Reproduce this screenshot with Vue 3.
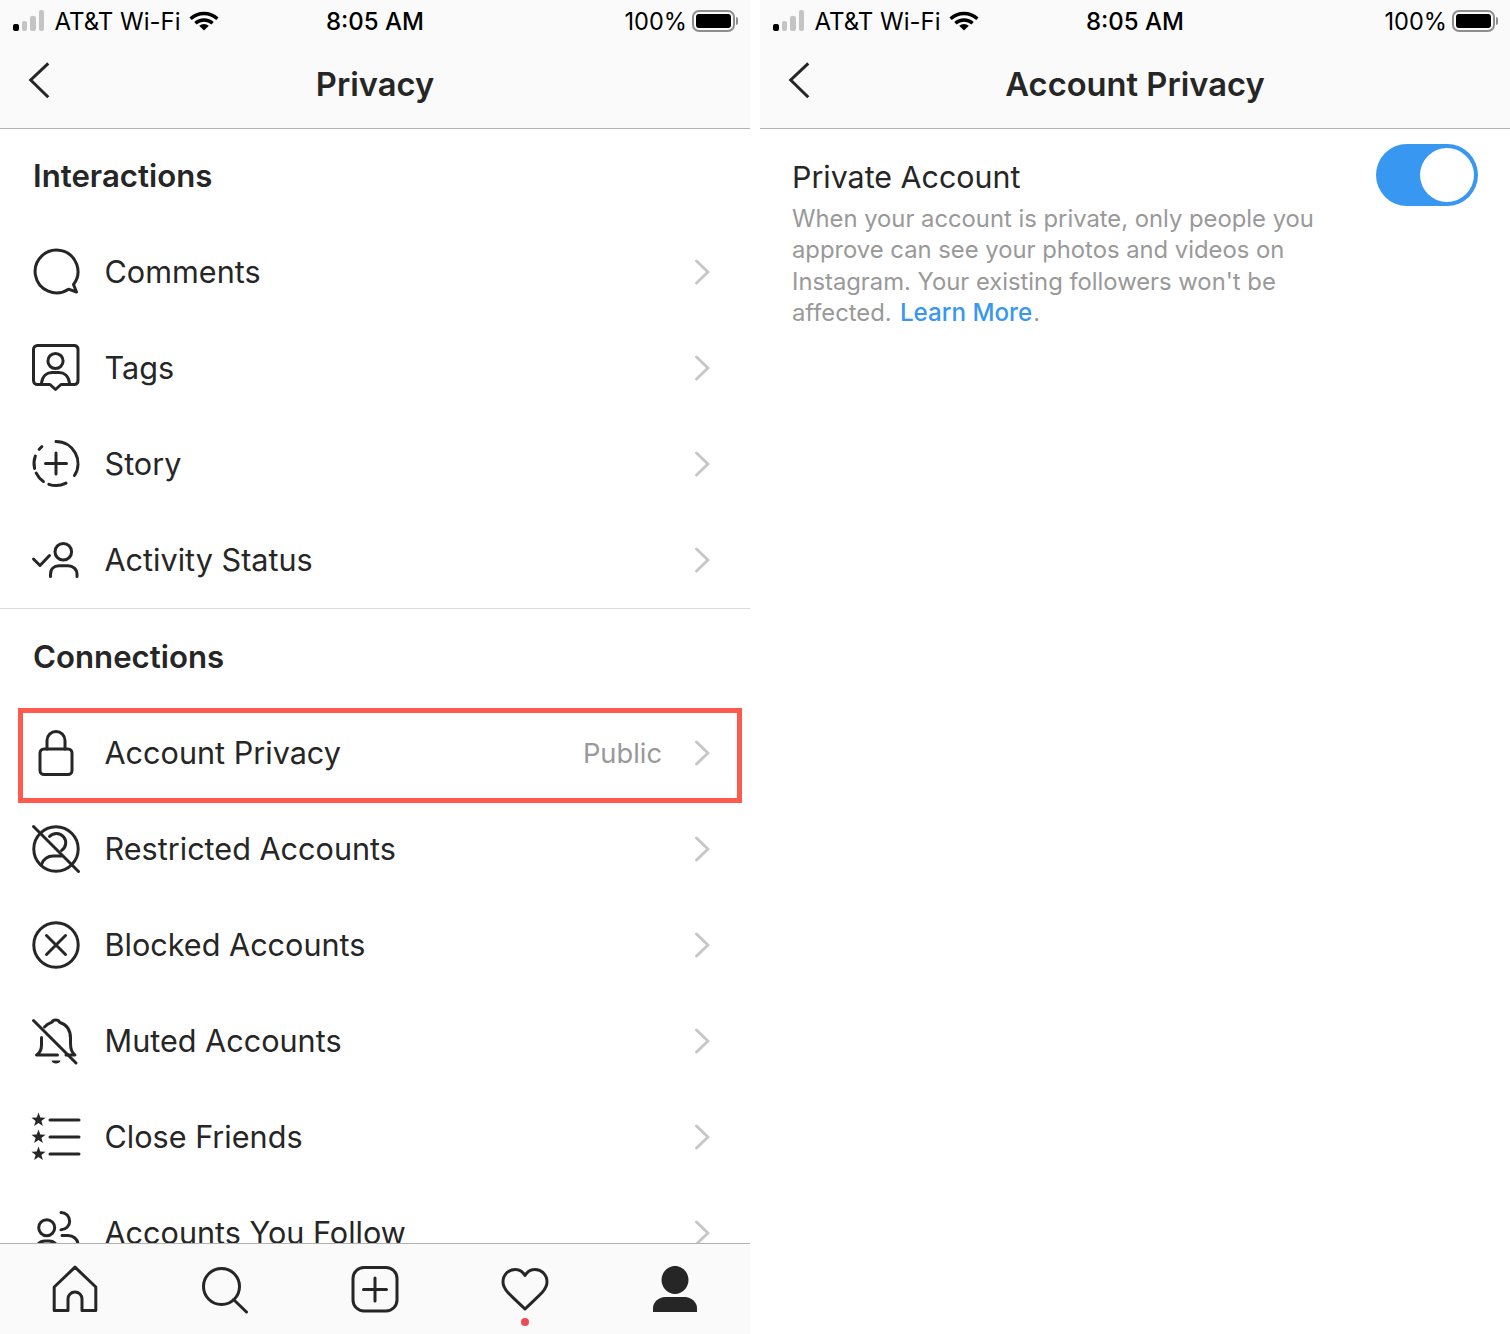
<script setup>
const circle = (cx, cy, r) => `M${cx - r} ${cy}a${r} ${r} 0 1 0 ${2 * r} 0a${r} ${r} 0 1 0 ${-2 * r} 0Z`
const arc = (cx, cy, r, a0, a1) => {
  const p = (a) => {
    const t = (a * Math.PI) / 180
    return `${(cx + r * Math.sin(t)).toFixed(2)} ${(cy - r * Math.cos(t)).toFixed(2)}`
  }
  return `M${p(a0)}A${r} ${r} 0 ${a1 - a0 > 180 ? 1 : 0} 1 ${p(a1)}`
}
const star = (cx, cy) => {
  const pts = [[0,-7.4],[1.8,-2.4],[7,-2.3],[2.9,0.9],[4.4,6],[0,3],[-4.4,6],[-2.9,0.9],[-7,-2.3],[-1.8,-2.4]]
  return 'M' + pts.map(([x, y]) => `${cx + x} ${cy + y}`).join('L') + 'Z'
}

const icons = {
  comments: { s: ['M36.5 41.2L44.5 44L41.5 36.5A21.4 21.4 0 1 0 36.5 41.2Z'] },
  tags: { s: [
    'M18 40.5L23.5 45.5L29 40.5H42.5A4 4 0 0 0 46 36.5V5.5A4 4 0 0 0 42.5 1.5H5.5A4 4 0 0 0 1.5 5.5V36.5A4 4 0 0 0 5.5 40.5Z',
    circle(23.5, 17, 7.6),
    'M9.5 39C10.5 32 15 28.5 20 28.5H27C32 28.5 36.5 32 37.5 39',
  ] },
  story: { s: [
    arc(24, 23.5, 22, 0, 123), arc(24, 23.5, 22, 153, 199), arc(24, 23.5, 22, 215, 244),
    arc(24, 23.5, 22, 257, 290), arc(24, 23.5, 22, 310, 320), 'M13.5 23.5H34.5M24 13V34',
  ] },
  activity: { s: [
    'M1.5 23L8 29.5L17.5 19.5',
    circle(31.3, 15.7, 8.3),
    'M18.5 40.5V38.5C18.5 33 22 29.8 27 29.8H36C41 29.8 45 33 45 38.5V40.5',
  ] },
  lock: { s: [
    'M12 20H36A4 4 0 0 1 40 24V41.5A4 4 0 0 1 36 45.5H12A4 4 0 0 1 8 41.5V24A4 4 0 0 1 12 20Z',
    'M15 20V11.5A9 9 0 0 1 33 11.5V20',
  ] },
  restricted: { s: [
    circle(24, 24, 22.2), 'M1.5 1.5L46.5 46.5',
    'M17.5 11.5A9.3 9.3 0 1 1 29.5 25.5', 'M9.5 39.5C11 34 16 31 21 31H30',
  ] },
  blocked: { s: [circle(24, 24, 22.2), 'M14.5 14.5L33.5 33.5M33.5 14.5L14.5 33.5'] },
  muted: {
    s: [
      'M1.5 3.5L44 46',
      'M12.5 10C15 7.5 17 6.2 20 5.2C21 2.3 26.5 2.3 27.5 5.2C34.5 7.5 38.5 13 38.5 21V26C38.5 31.5 39 35.5 43 38H34',
      'M9.5 20.5V28C9.5 32 8.5 35.5 4.5 38H25.5',
    ],
    f: ['M19.5 43.5H28.5C28 47.5 20 47.5 19.5 43.5Z'],
  },
  friends: {
    s: ['M18 7H47M18 24H47M18 41H47'],
    f: [star(6.5, 7), star(6.5, 24), star(6.5, 41)],
  },
  follow: { s: [
    circle(14.7, 18.7, 8),
    'M29 3.5A8.6 8.6 0 1 1 29 20.8',
    'M3 44C3 36 8 32 13 32H17C22 32 27 36 27 44',
    'M30 26.5H36C41 26.5 46 30 46 36V44',
  ] },
}

const interactions = [
  { label: 'Comments', icon: 'comments' },
  { label: 'Tags', icon: 'tags' },
  { label: 'Story', icon: 'story' },
  { label: 'Activity Status', icon: 'activity' },
]
const connections = [
  { label: 'Account Privacy', icon: 'lock', value: 'Public', marked: true },
  { label: 'Restricted Accounts', icon: 'restricted' },
  { label: 'Blocked Accounts', icon: 'blocked' },
  { label: 'Muted Accounts', icon: 'muted' },
  { label: 'Close Friends', icon: 'friends' },
  { label: 'Accounts You Follow', icon: 'follow' },
]
const sections = [
  { title: 'Interactions', items: interactions },
  { title: 'Connections', items: connections },
]
const signal = [
  { h: 7, on: true },
  { h: 10, on: false },
  { h: 15, on: false },
  { h: 21, on: false },
]
</script>

<template>
  <div class="page">
    <section v-for="screen in ['Privacy', 'Account Privacy']" :key="screen" class="phone">
      <header class="top">
        <div class="status">
          <div class="status-left">
            <div class="signal">
              <i v-for="(b, n) in signal" :key="n" :class="{ on: b.on }" :style="{ height: b.h + 'px' }"></i>
            </div>
            <span class="carrier">AT&amp;T Wi-Fi</span>
            <svg class="wifi" width="30" height="22" viewBox="0 0 30 22">
              <path d="M1.6 9.8A19.5 19.5 0 0 1 28.4 9.8" />
              <path d="M6.4 14.3A12.9 12.9 0 0 1 23.6 14.3" />
              <path class="fill" d="M10.2 16.8A7.4 7.4 0 0 1 19.8 16.8L15 21.6Z" />
            </svg>
          </div>
          <span class="time">8:05 AM</span>
          <div class="status-right">
            <span class="pct">100%</span>
            <span class="battery"><i></i></span>
            <span class="nub"></span>
          </div>
        </div>
        <div class="nav">
          <svg class="back" width="24" height="40" viewBox="0 0 24 40">
            <path d="M20.3 3.3L2.7 20L20.3 37.3" />
          </svg>
          <h1>{{ screen }}</h1>
        </div>
      </header>

      <template v-if="screen === 'Privacy'">
        <main class="list">
          <div v-for="(sec, i) in sections" :key="sec.title" class="section" :class="{ ruled: i === 0 }">
            <h2>{{ sec.title }}</h2>
            <div v-for="item in sec.items" :key="item.label" class="row">
              <svg class="icon" width="48" height="48" viewBox="0 0 48 48">
                <path v-for="d in icons[item.icon].s" :key="d" :d="d" />
                <path v-for="d in icons[item.icon].f || []" :key="d" class="fill" :d="d" />
              </svg>
              <span class="label">{{ item.label }}</span>
              <span v-if="item.value" class="value">{{ item.value }}</span>
              <svg class="chev" width="16" height="26" viewBox="0 0 16 26">
                <path d="M2.5 2L14 13L2.5 24" />
              </svg>
              <div v-if="item.marked" class="mark"></div>
            </div>
          </div>
        </main>
        <nav class="tabs">
          <svg class="tab" width="48" height="48" viewBox="0 0 48 48">
            <path d="M3.2 45.5V22L24 2.2L44.8 22V45.5H31V34A7 7 0 0 0 17 34V45.5Z" />
          </svg>
          <svg class="tab" width="48" height="48" viewBox="0 0 48 48">
            <path d="M38.5 21.5A18 18 0 1 1 2.5 21.5A18 18 0 1 1 38.5 21.5ZM32.5 34.5L45.5 47" />
          </svg>
          <svg class="tab" width="48" height="48" viewBox="0 0 48 48">
            <path d="M13 2.5H35A11 11 0 0 1 46 13.5V35A11 11 0 0 1 35 46H13A11 11 0 0 1 2 35V13.5A11 11 0 0 1 13 2.5ZM12.5 24.5H35.5M24 13V36" />
          </svg>
          <div class="tab heart">
            <svg width="48" height="48" viewBox="0 0 48 48">
              <path d="M24 44C18 38 12 33 6.5 27C3 23 2 20 2 17C2 9.5 7.5 4.5 14 4.5C18.5 4.5 22 7 24 10.5C26 7 29.5 4.5 34 4.5C40.5 4.5 46 9.5 46 17C46 20 45 23 41.5 27C36 33 30 38 24 44Z" />
            </svg>
            <i class="dot"></i>
          </div>
          <svg class="tab" width="48" height="48" viewBox="0 0 48 48">
            <path class="fill" d="M24 1C31.5 1 37.5 7.5 37.5 15C37.5 22.5 31.5 29 24 29C16.5 29 10.5 22.5 10.5 15C10.5 7.5 16.5 1 24 1Z" />
            <path class="fill" d="M2 47V43C2 37 8 32 14 32H34C40 32 46 37 46 43V47Z" />
          </svg>
        </nav>
      </template>

      <main v-else class="detail">
        <div class="copy">
          <h3>Private Account</h3>
          <p>When your account is private, only people you approve can see your photos and videos on Instagram. Your existing followers won't be affected. <a>Learn More</a>.</p>
        </div>
        <div class="toggle"><i></i></div>
      </main>
    </section>
  </div>
</template>

<style>
html, body { margin: 0; background: #fff; }
</style>

<style scoped>
.page {
  display: flex;
  gap: 10px;
  width: 1510px;
  height: 1334px;
  overflow: hidden;
  background: #fff;
  color: #262626;
  font-family: Inter, "Liberation Sans", sans-serif;
}
.phone {
  width: 750px;
  height: 1334px;
  display: flex;
  flex-direction: column;
}
.top {
  height: 129px;
  box-sizing: border-box;
  flex: none;
  background: #fafafa;
  border-bottom: 1px solid #b2b2b2;
  display: flex;
  flex-direction: column;
}
.status {
  height: 42px;
  display: grid;
  grid-template-columns: 1fr auto 1fr;
  align-items: center;
  color: #000;
  font-size: 24px;
}
.status-left { display: flex; align-items: center; padding-left: 13px; }
.signal { display: flex; align-items: flex-end; gap: 3px; height: 21px; margin-top: -2px; }
.signal i { width: 5.5px; border-radius: 2px; background: #c4c4c4; }
.signal i.on { background: #000; }
.carrier { margin-left: 10.5px; }
.wifi { margin-left: 8px; margin-top: -2px; }
.wifi path { fill: none; stroke: #000; stroke-width: 3.4; }
.wifi path.fill { fill: #000; stroke: none; }
.time { font-weight: 500; }
.status-right { display: flex; align-items: center; justify-content: flex-end; padding-right: 12px; }
.pct { margin-right: 5px; font-size: 23.6px; }
.battery {
  box-sizing: border-box;
  width: 43px;
  height: 22px;
  border: 2px solid #8e8e8e;
  border-radius: 7px;
  padding: 2px;
  display: flex;
}
.battery i { flex: 1; background: #000; border-radius: 3px; }
.nub { width: 2px; height: 8px; margin-left: 1px; background: #8e8e8e; border-radius: 0 2px 2px 0; }
.nav {
  flex: 1;
  position: relative;
  display: flex;
  align-items: center;
  justify-content: center;
}
.back { position: absolute; left: 28px; top: 18px; }
.back path { fill: none; stroke: #262626; stroke-width: 3; }
h1 { margin: 0 0 2px; font-size: 32.7px; font-weight: 600; line-height: 40px; }
.list { flex: 1; min-height: 0; overflow: hidden; }
.section.ruled { border-bottom: 1px solid #dbdbdb; }
h2 {
  margin: 0;
  box-sizing: border-box;
  height: 95px;
  padding: 0 0 2px 33px;
  display: flex;
  align-items: center;
  font-size: 31.2px;
  font-weight: 600;
}
.section + .section h2 { height: 96px; padding-bottom: 0; }
.row {
  position: relative;
  height: 96px;
  display: flex;
  align-items: center;
  padding: 0 40px 0 32px;
}
.icon { flex: none; overflow: visible; }
.icon path, .tab path { fill: none; stroke: #262626; stroke-width: 3; stroke-linecap: round; stroke-linejoin: round; }
.icon path.fill, .tab path.fill { fill: #262626; stroke: none; }
.label { margin: 0 0 2px 24.5px; font-size: 30.6px; flex: 1; white-space: nowrap; }
.value { color: #999; font-size: 27.3px; margin-right: 32px; }
.chev path { fill: none; stroke: #c7c7c7; stroke-width: 3; stroke-linecap: round; stroke-linejoin: round; }
.mark {
  position: absolute;
  left: 18px;
  top: 3px;
  width: 724px;
  height: 95px;
  box-sizing: border-box;
  border: 5px solid #fe5a4e;
}
.tabs {
  flex: none;
  height: 91px;
  box-sizing: border-box;
  border-top: 1px solid #b2b2b2;
  background: #fafafa;
  display: grid;
  grid-template-columns: repeat(5, 1fr);
  justify-items: center;
  padding-top: 21px;
}
.tab { display: block; overflow: visible; }
.heart { position: relative; width: 48px; height: 48px; }
.heart svg { display: block; overflow: visible; }
.dot {
  position: absolute;
  left: 20px;
  top: 53px;
  width: 8px;
  height: 8px;
  border-radius: 50%;
  background: #ed4956;
}
.detail {
  flex: 1;
  display: flex;
  justify-content: space-between;
  align-items: flex-start;
  padding: 15px 32px 0;
}
.copy { width: 530px; }
h3 { margin: 13px 0 0; font-size: 30.4px; font-weight: 400; line-height: 40px; }
p { margin: 6px 0 0; font-size: 23.8px; line-height: 31.3px; color: #999; }
p a { color: #3897f0; font-weight: 500; font-size: 24.2px; margin: 0 1px 0 1.5px; }
.toggle {
  flex: none;
  width: 102px;
  height: 62px;
  box-sizing: border-box;
  border-radius: 31px;
  background: #3897f0;
  display: flex;
  justify-content: flex-end;
  align-items: center;
  padding-right: 4px;
}
.toggle i { width: 54px; height: 54px; border-radius: 50%; background: #fff; }
</style>
